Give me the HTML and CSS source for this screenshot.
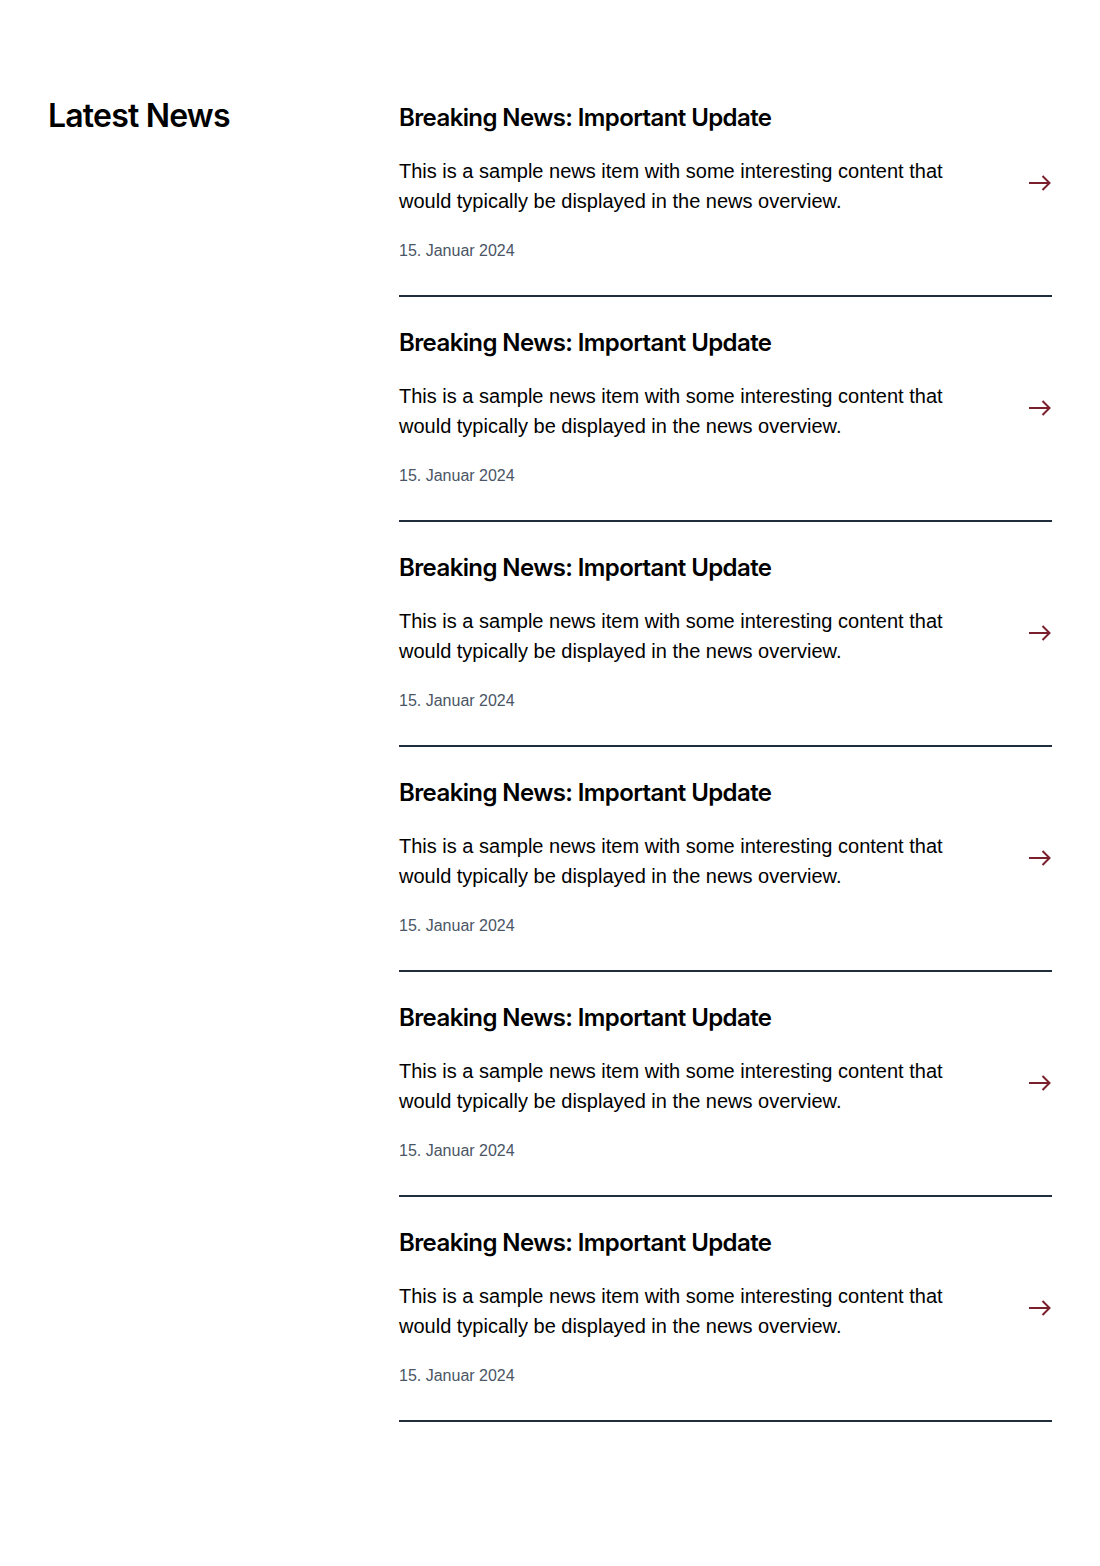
FILE: index.html
```html
<!DOCTYPE html>
<html lang="de">
<head>
<meta charset="utf-8">
<title>Latest News</title>
<link rel="stylesheet" href="styles.css">
</head>
<body>
<section class="news">
  <div class="news-aside">
    <h2 class="news-heading">Latest News</h2>
  </div>
  <div class="news-list">
    <a class="news-item" href="#">
      <div class="news-text">
        <h3 class="news-title">Breaking News: Important Update</h3>
        <p class="news-excerpt">This is a sample news item with some interesting content that would typically be displayed in the news overview.</p>
        <p class="news-date">15. Januar 2024</p>
      </div>
      <svg class="news-arrow" viewBox="0 0 24 24" width="24" height="24" fill="none" stroke="currentColor" stroke-width="2" stroke-linecap="butt" stroke-linejoin="miter"><path d="M1 12h20.5M14.5 5l7 7-7 7"/></svg>
    </a>
    <a class="news-item" href="#">
      <div class="news-text">
        <h3 class="news-title">Breaking News: Important Update</h3>
        <p class="news-excerpt">This is a sample news item with some interesting content that would typically be displayed in the news overview.</p>
        <p class="news-date">15. Januar 2024</p>
      </div>
      <svg class="news-arrow" viewBox="0 0 24 24" width="24" height="24" fill="none" stroke="currentColor" stroke-width="2" stroke-linecap="butt" stroke-linejoin="miter"><path d="M1 12h20.5M14.5 5l7 7-7 7"/></svg>
    </a>
    <a class="news-item" href="#">
      <div class="news-text">
        <h3 class="news-title">Breaking News: Important Update</h3>
        <p class="news-excerpt">This is a sample news item with some interesting content that would typically be displayed in the news overview.</p>
        <p class="news-date">15. Januar 2024</p>
      </div>
      <svg class="news-arrow" viewBox="0 0 24 24" width="24" height="24" fill="none" stroke="currentColor" stroke-width="2" stroke-linecap="butt" stroke-linejoin="miter"><path d="M1 12h20.5M14.5 5l7 7-7 7"/></svg>
    </a>
    <a class="news-item" href="#">
      <div class="news-text">
        <h3 class="news-title">Breaking News: Important Update</h3>
        <p class="news-excerpt">This is a sample news item with some interesting content that would typically be displayed in the news overview.</p>
        <p class="news-date">15. Januar 2024</p>
      </div>
      <svg class="news-arrow" viewBox="0 0 24 24" width="24" height="24" fill="none" stroke="currentColor" stroke-width="2" stroke-linecap="butt" stroke-linejoin="miter"><path d="M1 12h20.5M14.5 5l7 7-7 7"/></svg>
    </a>
    <a class="news-item" href="#">
      <div class="news-text">
        <h3 class="news-title">Breaking News: Important Update</h3>
        <p class="news-excerpt">This is a sample news item with some interesting content that would typically be displayed in the news overview.</p>
        <p class="news-date">15. Januar 2024</p>
      </div>
      <svg class="news-arrow" viewBox="0 0 24 24" width="24" height="24" fill="none" stroke="currentColor" stroke-width="2" stroke-linecap="butt" stroke-linejoin="miter"><path d="M1 12h20.5M14.5 5l7 7-7 7"/></svg>
    </a>
    <a class="news-item" href="#">
      <div class="news-text">
        <h3 class="news-title">Breaking News: Important Update</h3>
        <p class="news-excerpt">This is a sample news item with some interesting content that would typically be displayed in the news overview.</p>
        <p class="news-date">15. Januar 2024</p>
      </div>
      <svg class="news-arrow" viewBox="0 0 24 24" width="24" height="24" fill="none" stroke="currentColor" stroke-width="2" stroke-linecap="butt" stroke-linejoin="miter"><path d="M1 12h20.5M14.5 5l7 7-7 7"/></svg>
    </a>
  </div>
</section>
</body>
</html>
```

FILE: styles.css
```css
* { box-sizing: border-box; }

html, body {
  margin: 0;
  padding: 0;
  background: #ffffff;
}

body {
  font-family: "Liberation Sans", Arial, sans-serif;
  color: #000000;
}

.news {
  display: grid;
  grid-template-columns: 351px 653px;
  padding: 72px 48px 144px;
}

.news-heading {
  margin: 24px 0 0;
  font-family: Inter, "Noto Sans", sans-serif;
  font-weight: 600;
  font-size: 32px;
  line-height: 40px;
  letter-spacing: -0.025em;
  color: #000;
}

.news-list {
  display: flex;
  flex-direction: column;
}

.news-item {
  display: flex;
  align-items: center;
  justify-content: space-between;
  padding: 32px 0;
  border-bottom: 2px solid #1f2d3d;
  color: inherit;
  text-decoration: none;
}

.news-text {
  width: 580px;
}

.news-title {
  margin: 0;
  font-family: Inter, "Noto Sans", sans-serif;
  font-weight: 600;
  font-size: 24px;
  line-height: 28px;
  letter-spacing: -0.025em;
  color: #000;
}

.news-excerpt {
  margin: 24px 0 0;
  font-size: 20px;
  line-height: 30px;
  color: #000;
}

.news-date {
  margin: 23px 0 0;
  font-size: 16px;
  line-height: 24px;
  color: #4a5565;
}

.news-arrow {
  flex: none;
  margin-top: -1px;
  color: #7a1f2c;
}
```
